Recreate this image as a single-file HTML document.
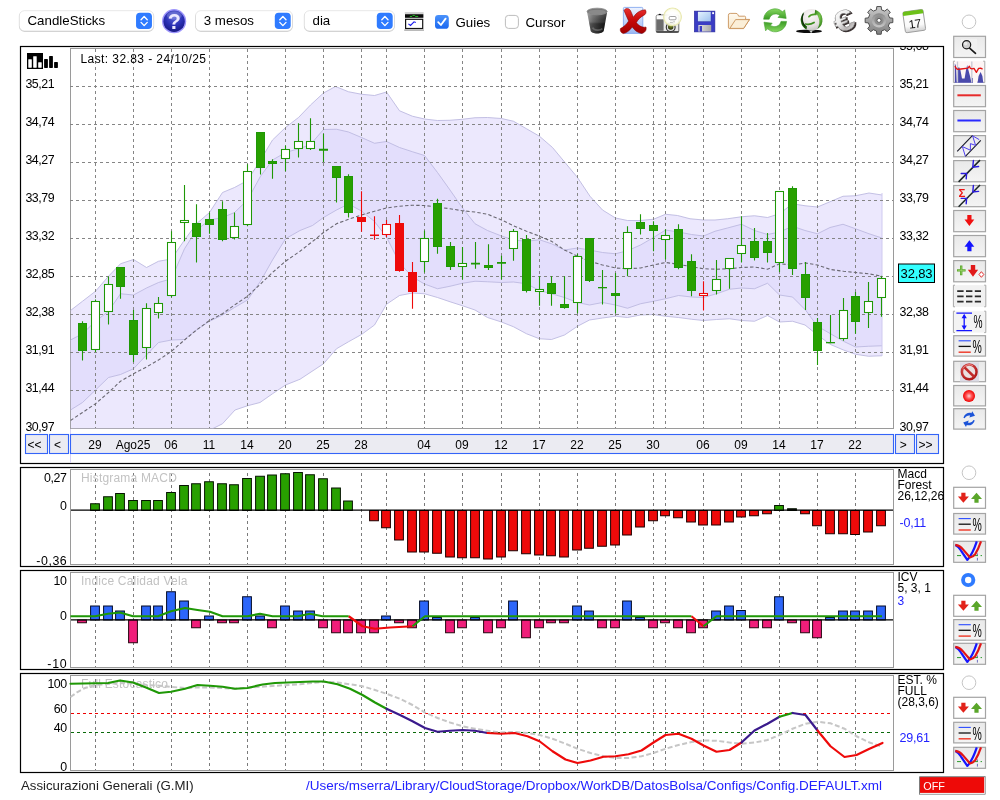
<!DOCTYPE html>
<html lang="ca"><head><meta charset="utf-8"><title>CandleSticks - Assicurazioni Generali (G.MI)</title>
<style>
html,body{margin:0;padding:0;background:#fff;}
body{width:1000px;height:800px;overflow:hidden;position:relative;font-family:"Liberation Sans",sans-serif;}
svg{position:absolute;left:0;top:0;display:block;opacity:.999}
text{font-family:"Liberation Sans",sans-serif;font-size:12px;fill:#000}
.ax{font-size:12.4px;letter-spacing:-0.42px}
.ttl{fill:#c2c2c2;font-size:12px}
.blue{fill:#2222ff}
.tb{font-size:13.3px}
</style></head><body>
<svg width="1000" height="800" viewBox="0 0 1000 800">
<defs>
<clipPath id="cpMain"><rect x="70.5" y="48.5" width="823" height="380"/></clipPath>
<clipPath id="cpLbl"><rect x="21" y="47" width="922" height="416"/></clipPath>
<clipPath id="cpMacd"><rect x="21" y="468" width="922" height="98"/></clipPath>
<linearGradient id="gBtn" x1="0" y1="0" x2="0" y2="1"><stop offset="0" stop-color="#e9e9e9"/><stop offset="1" stop-color="#f4f4f4"/></linearGradient>

<linearGradient id="gStep" x1="0" y1="0" x2="0" y2="1"><stop offset="0" stop-color="#4a92fb"/><stop offset="1" stop-color="#1b68f0"/></linearGradient>
<radialGradient id="gHelp" cx=".5" cy=".3" r=".75"><stop offset="0" stop-color="#5a63d8"/><stop offset=".55" stop-color="#2a2fb4"/><stop offset="1" stop-color="#15167a"/></radialGradient>
<linearGradient id="gTrash" x1="0" y1="0" x2="1" y2="0"><stop offset="0" stop-color="#8a8a8a"/><stop offset=".3" stop-color="#5c5c5c"/><stop offset=".7" stop-color="#2e2e2e"/><stop offset="1" stop-color="#141414"/></linearGradient>
<linearGradient id="gTrashV" x1="0" y1="0" x2="0" y2="1"><stop offset="0" stop-color="#fff" stop-opacity=".3"/><stop offset=".45" stop-color="#fff" stop-opacity=".08"/><stop offset=".6" stop-color="#000" stop-opacity=".25"/><stop offset="1" stop-color="#000" stop-opacity=".35"/></linearGradient>
<linearGradient id="gPage" x1="0" y1="0" x2="0" y2="1"><stop offset="0" stop-color="#eef3ff"/><stop offset="1" stop-color="#9cb8f2"/></linearGradient>
<linearGradient id="gX" x1="0" y1="0" x2="0" y2="1"><stop offset="0" stop-color="#e83030"/><stop offset=".5" stop-color="#c40808"/><stop offset="1" stop-color="#a00000"/></linearGradient>
<radialGradient id="gFlash" cx=".5" cy=".5" r=".5"><stop offset="0" stop-color="#fff"/><stop offset=".45" stop-color="#fff" stop-opacity=".95"/><stop offset=".75" stop-color="#fdfdf0" stop-opacity=".9"/><stop offset=".9" stop-color="#e6e6a8" stop-opacity=".95"/><stop offset="1" stop-color="#f0f0c0" stop-opacity="0"/></radialGradient><radialGradient id="gLens" cx=".5" cy=".3" r=".7"><stop offset="0" stop-color="#8a9a30"/><stop offset="1" stop-color="#202808"/></radialGradient>
<linearGradient id="gCam" x1="0" y1="0" x2="1" y2="0"><stop offset="0" stop-color="#6a6a6a"/><stop offset=".3" stop-color="#7e7e7e"/><stop offset=".34" stop-color="#c8c8c8"/><stop offset="1" stop-color="#d8d8d8"/></linearGradient>
<linearGradient id="gLabel" x1="0" y1="0" x2="1" y2="1"><stop offset="0" stop-color="#e6f4ff"/><stop offset="1" stop-color="#9cc0ee"/></linearGradient>
<linearGradient id="gShut" x1="0" y1="0" x2="1" y2="0"><stop offset="0" stop-color="#e0e0e0"/><stop offset="1" stop-color="#a8a8a8"/></linearGradient>
<linearGradient id="gFold" x1="0" y1="0" x2="0" y2="1"><stop offset="0" stop-color="#fffaf0"/><stop offset="1" stop-color="#f6e6c8"/></linearGradient>
<linearGradient id="gRef" x1="0" y1="0" x2="0" y2="1"><stop offset="0" stop-color="#86d860"/><stop offset="1" stop-color="#3a9a24"/></linearGradient>
<radialGradient id="gBallW" cx=".45" cy=".3" r=".8"><stop offset="0" stop-color="#fbf8f8"/><stop offset=".6" stop-color="#e6e0e0"/><stop offset="1" stop-color="#b4b8b4"/></radialGradient><radialGradient id="gBall" cx=".6" cy=".35" r=".7"><stop offset="0" stop-color="#7cc850"/><stop offset=".6" stop-color="#4a9a2a"/><stop offset="1" stop-color="#2a6a14"/></radialGradient>
<linearGradient id="gSilver" x1="0" y1="0" x2="1" y2="1"><stop offset="0" stop-color="#fafafa"/><stop offset=".5" stop-color="#d0d0d0"/><stop offset="1" stop-color="#8a8a8a"/></linearGradient>
<linearGradient id="gEuro" gradientUnits="userSpaceOnUse" x1="-8" y1="-12" x2="8" y2="12"><stop offset="0" stop-color="#ffffff"/><stop offset=".45" stop-color="#ececec"/><stop offset=".75" stop-color="#b4b0b0"/><stop offset="1" stop-color="#f0f0f0"/></linearGradient>
<linearGradient id="gGear" x1="0" y1="0" x2="0" y2="1"><stop offset="0" stop-color="#cacaca"/><stop offset="1" stop-color="#808080"/></linearGradient>
<linearGradient id="gGear2" x1="0" y1="0" x2="0" y2="1"><stop offset="0" stop-color="#8a8a8a"/><stop offset="1" stop-color="#c8c8c8"/></linearGradient>
<linearGradient id="gCal" x1="0" y1="0" x2="0" y2="1"><stop offset="0" stop-color="#fff"/><stop offset=".7" stop-color="#fafafa"/><stop offset="1" stop-color="#d0d0d0"/></linearGradient>
<radialGradient id="gStop" cx=".4" cy=".35" r=".7"><stop offset="0" stop-color="#e86a6a"/><stop offset="1" stop-color="#b01818"/></radialGradient>
<radialGradient id="gRec" cx=".5" cy=".5" r=".5"><stop offset="0" stop-color="#ffd0d0"/><stop offset=".45" stop-color="#ff5a5a"/><stop offset="1" stop-color="#ee0000"/></radialGradient>
<filter id="fSh" x="-10%" y="-10%" width="120%" height="140%"><feGaussianBlur stdDeviation=".7"/></filter>

</defs>
<rect width="1000" height="800" fill="#fff"/>

<rect x="19.05" y="11.3" width="134.9" height="20.6" rx="5.5" fill="#000" fill-opacity=".14" filter="url(#fSh)"/><rect x="19.25" y="10.7" width="134.5" height="20.2" rx="5.2" fill="#fff" stroke="#000" stroke-opacity=".12" stroke-width=".8"/><rect x="136.05" y="12.8" width="15.9" height="16.2" rx="3.8" fill="#2f7bff"/><path d="M141.05 19.7L144.15 16.5L147.25 19.7M141.05 22.4L144.15 25.6L147.25 22.4" fill="none" stroke="#fff" stroke-width="1.35" stroke-linecap="round" stroke-linejoin="round"/><text class="tb" x="27.5" y="25">CandleSticks</text>
<circle cx="174.1" cy="21.2" r="12.1" fill="#9c94fb"/><circle cx="174.1" cy="21.2" r="10.7" fill="url(#gHelp)"/>
<ellipse cx="174.3" cy="15.5" rx="7.5" ry="4.2" fill="#fff" fill-opacity=".18"/>
<text x="174.3" y="29" text-anchor="middle" style="font-size:21.5px;font-weight:bold;fill:#ece8ff">?</text>
<rect x="195.3" y="11.3" width="97.4" height="20.6" rx="5.5" fill="#000" fill-opacity=".14" filter="url(#fSh)"/><rect x="195.5" y="10.7" width="97" height="20.2" rx="5.2" fill="#fff" stroke="#000" stroke-opacity=".12" stroke-width=".8"/><rect x="274.8" y="12.8" width="15.9" height="16.2" rx="3.8" fill="#2f7bff"/><path d="M279.8 19.7L282.9 16.5L286 19.7M279.8 22.4L282.9 25.6L286 22.4" fill="none" stroke="#fff" stroke-width="1.35" stroke-linecap="round" stroke-linejoin="round"/><text class="tb" x="203.75" y="25">3 mesos</text>
<rect x="304.05" y="11.3" width="90.65" height="20.6" rx="5.5" fill="#000" fill-opacity=".14" filter="url(#fSh)"/><rect x="304.25" y="10.7" width="90.25" height="20.2" rx="5.2" fill="#fff" stroke="#000" stroke-opacity=".12" stroke-width=".8"/><rect x="376.8" y="12.8" width="15.9" height="16.2" rx="3.8" fill="#2f7bff"/><path d="M381.8 19.7L384.9 16.5L388 19.7M381.8 22.4L384.9 25.6L388 22.4" fill="none" stroke="#fff" stroke-width="1.35" stroke-linecap="round" stroke-linejoin="round"/><text class="tb" x="312.5" y="25">dia</text>
<rect x="404.8" y="12.2" width="18.8" height="1.7" fill="#cdcdcd"/><rect x="405" y="14.2" width="18.4" height="3.6" fill="#0a0a0a"/><path d="M409.8 16.4h2.2l.9-1h1.7l.8 1h2.8" fill="none" stroke="#20c020" stroke-width="1"/><rect x="405.6" y="19.3" width="17.1" height="9.2" fill="#fff" stroke="#141414" stroke-width="1.2"/><path d="M404.2 30.1H424" stroke="#8c8c8c" stroke-width="1"/><path d="M408.4 23.9L410.5 25.5L414 21.8L415.8 22.6" fill="none" stroke="#1a1aee" stroke-width="1.1"/>
<rect x="435" y="15" width="13.8" height="13.8" rx="3.4" fill="url(#gStep)"/><path d="M438.2 22.2L440.9 25L445.6 18.6" fill="none" stroke="#fff" stroke-width="1.8" stroke-linecap="round" stroke-linejoin="round"/>
<text class="tb" x="455.5" y="26.7">Guies</text>
<rect x="505.4" y="15.4" width="13" height="13" rx="3.2" fill="#fff" stroke="#bdbdbd" stroke-width="1"/>
<text class="tb" x="525.5" y="26.7">Cursor</text>
<path d="M587 11.6C587 8.2 607.2 8.2 607.2 11.6L603.8 30.6C603.2 34.6 591 34.6 590.6 30.6Z" fill="url(#gTrash)"/>
<path d="M587 11.6C587 8.2 607.2 8.2 607.2 11.6L603.8 30.6C603.2 34.6 591 34.6 590.6 30.6Z" fill="url(#gTrashV)"/>
<ellipse cx="597.1" cy="11.5" rx="10" ry="3.3" fill="#777" stroke="#8e8e8e" stroke-width=".9"/><ellipse cx="597.1" cy="12" rx="8.6" ry="2.3" fill="#8a8a8a"/>
<path d="M592.6 27.6C594 30.6 600 31 602.4 28.6" fill="none" stroke="#9a9a9a" stroke-width="1.6" stroke-opacity=".45"/>
<rect x="623.4" y="7.4" width="19.4" height="26" rx="1" fill="url(#gPage)" stroke="#86a8ee" stroke-width=".9"/>
<path d="M624 10.4C625.8 7.6 629 7.8 630.6 10.8L633.4 17.2C636.4 12.6 640.6 9.8 645.4 9.8C646.8 12.2 646 14.4 643.6 15.4C640.6 17 638 19.6 636.4 22.6C638.8 26 642.2 27.8 646 27C646.8 30.4 644.8 33 641.4 33.4C637.6 32.8 634.4 30.2 632.2 27C629.8 30.4 626.8 33 623.2 33.6C620.8 32.8 619.8 30.6 620.4 28.6C624 26.8 626.8 24 628.6 21C627 17.2 625.2 13.6 624 10.4Z" fill="url(#gX)" stroke="#7c0000" stroke-width=".5"/>
<rect x="656.2" y="15" width="22.6" height="17.5" rx="1.6" fill="#e9e9e9" stroke="#5a5a5a" stroke-width=".9"/>
<rect x="656.7" y="19.2" width="6.9" height="11.6" fill="#6c6c6c"/><rect x="656.7" y="15.5" width="6.9" height="3.7" fill="#fbfbfb"/><ellipse cx="659.8" cy="14.4" rx="1.3" ry=".7" fill="#111"/>
<path d="M656.4 31.8H678.6" stroke="#4a4a4a" stroke-width="1.5"/>
<circle cx="670.7" cy="27.2" r="4.4" fill="#e4e4e4" stroke="#3a3a3a" stroke-width="1.2"/><circle cx="670.7" cy="27" r="2.7" fill="url(#gLens)"/>
<circle cx="672.5" cy="16.9" r="9.9" fill="url(#gFlash)"/>
<rect x="669.2" y="16.5" width="6.8" height="3.3" rx="1" fill="#fff" stroke="#8a8a8a" stroke-width=".8"/>
<path d="M670 22.4h2.4l1.2-.6h1.4" stroke="#9a9a9a" stroke-width=".6" fill="none"/>
<rect x="694.3" y="11.1" width="20.6" height="20.8" fill="#3a3cc4" stroke="#2a2a9a" stroke-width=".6"/>
<rect x="697.8" y="11.6" width="13.2" height="10" fill="url(#gLabel)" stroke="#2a2a9a" stroke-width=".4"/>
<rect x="698.4" y="25" width="12.8" height="6.6" fill="url(#gShut)"/><rect x="699.6" y="26" width="2.4" height="5.6" fill="#3a3cc4"/><rect x="712.2" y="12.2" width="1.8" height="1.9" fill="#fff"/>
<path d="M728.4 15.2Q728.4 13.4 730.2 13.4H736Q737.4 13.4 738 14.8L738.6 16.2H744.6Q745.6 16.2 745.6 17.4V19.4H749.6L743.6 28.6H729.6Q728.4 28.6 728.4 27.2Z" fill="url(#gFold)" stroke="#c8925a" stroke-width=".9" stroke-linejoin="round"/>
<path d="M729.8 28.4L735.6 19.6H749.4L743.6 28.4Z" fill="#fbefd8" stroke="#c8925a" stroke-width=".9" stroke-linejoin="round"/>
<path d="M763.6 19.2A11.4 11.4 0 0 1 782.6 11.8L784.6 9.8L786.2 18.4L778 17.4L779.8 15.4A6.6 6.6 0 0 0 769.2 19.2Z" fill="url(#gRef)" stroke="#3f9e2a" stroke-width=".6" stroke-linejoin="round"/>
<path d="M763.6 19.2A11.4 11.4 0 0 1 782.6 11.8L784.6 9.8L786.2 18.4L778 17.4L779.8 15.4A6.6 6.6 0 0 0 769.2 19.2Z" transform="rotate(180 775.1 20.3)" fill="url(#gRef)" stroke="#3f9e2a" stroke-width=".6" stroke-linejoin="round"/>
<ellipse cx="809" cy="31.2" rx="13" ry="1.8" fill="#0c0c0c"/>
<circle cx="811.6" cy="19.9" r="10.8" fill="url(#gBallW)"/>
<path d="M815.2 9.7A10.8 10.8 0 0 1 817.4 29C819.6 25 820 21.4 818.6 18C818 16.2 817.4 14.8 816.8 13.9L814.6 14.5Z" fill="url(#gBall)"/>
<path d="M804.4 11.8A10.8 10.8 0 0 0 806.4 29.4C806.8 28.4 807 27.4 806.9 26.3C803.6 24.6 802.2 21 802.6 18C802.9 15.6 803.4 13.6 804.4 11.8Z" fill="#1c5a0c"/>
<path d="M803.4 13.6C801.6 17.6 802 22.6 805.2 26.4" fill="none" stroke="#061c02" stroke-width="1.1" stroke-opacity=".8"/>
<path d="M808.9 16.7Q811 13.8 816 14.4" fill="none" stroke="#4c9c26" stroke-width="1.7" stroke-linecap="round"/>
<path d="M805.6 24Q810 25 814.1 22.5" fill="none" stroke="#3c8c1e" stroke-width="1.7" stroke-linecap="round"/>
<path d="M809.6 31L811.2 33L812.6 30.8" fill="#dfe6e0" stroke="#8a8a8a" stroke-width=".3"/>
<g transform="translate(843.6 20.4) rotate(-22) scale(1.26 1)"><text x="0.6" y="11.8" text-anchor="middle" style="font-size:29px;font-weight:bold;fill:#3a3232;stroke:#3a3232;stroke-width:1.1px">€</text><text x="0" y="10.2" text-anchor="middle" style="font-size:29px;font-weight:bold;fill:url(#gEuro);stroke:#8a8a8a;stroke-width:.45px">€</text></g>
<path d="M876.81 6.57L881.19 6.57L881.54 9.80L884.70 11.11L887.23 9.07L890.33 12.17L888.29 14.70L889.60 17.86L892.83 18.21L892.83 22.59L889.60 22.94L888.29 26.10L890.33 28.63L887.23 31.73L884.70 29.69L881.54 31.00L881.19 34.23L876.81 34.23L876.46 31.00L873.30 29.69L870.77 31.73L867.67 28.63L869.71 26.10L868.40 22.94L865.17 22.59L865.17 18.21L868.40 17.86L869.71 14.70L867.67 12.17L870.77 9.07L873.30 11.11L876.46 9.80Z" fill="url(#gGear)" stroke="#4e4e4e" stroke-width="1" stroke-linejoin="round"/>
<circle cx="879" cy="20.4" r="7.2" fill="url(#gGear2)"/><circle cx="879" cy="20.4" r="4.6" fill="#8e8e8e"/><circle cx="879" cy="20.4" r="2" fill="#fff" stroke="#4a4a4a" stroke-width=".8"/>
<g transform="rotate(-8 914 21)"><rect x="904" y="10.6" width="20.4" height="21" rx="1.6" fill="url(#gCal)" stroke="#9a9a9a" stroke-width=".9"/><path d="M904 14.6V12.2Q904 10.6 905.6 10.6H922.8Q924.4 10.6 924.4 12.2V14.6Z" fill="#6cc018"/><text x="914.2" y="28" text-anchor="middle" style="font-size:12px;letter-spacing:-.6px;fill:#111">17</text></g>
<circle cx="969" cy="21.8" r="6.8" fill="#fff" stroke="#c6c6c6" stroke-width="1"/>
<rect x="20.5" y="46.5" width="923" height="417" fill="#fff" stroke="#000" stroke-width="1.2"/>
<rect x="70.5" y="48.5" width="823" height="380" fill="#fff" stroke="#9a9a9a" stroke-width="1"/>
<g clip-path="url(#cpMain)">
<polygon points="70.5,310.5 82.5,301.25 95.5,291.25 108.5,276.25 120.5,263.75 133.5,259.5 146.5,267.5 158.5,261.25 171.5,259 184.5,240 196.5,223.75 209.5,212.5 222.5,192.5 234.5,187.5 247.5,180.5 260.5,160 272.5,140 285.5,127.5 298.5,117.5 310.5,105 323.5,93 335.5,86.5 348.5,91.75 361.5,94.25 374.5,95.5 386.5,92 399.5,110.75 412.5,116.25 424.5,119 437.5,120.5 450,120.25 462.5,119.25 475,117.75 487.5,117.5 501.5,118.5 513.5,121.25 526.5,128.75 539.5,136.25 552.5,147.5 565,162.5 577.5,177.5 590,196.25 602.5,210 615.5,218 627.5,220.5 640,220.5 653.5,219.25 665.5,214.25 677.5,215.5 690,218.75 703.5,220 715,220 727.5,218.75 741.5,216.75 754.5,215.75 767.5,217.5 779.5,213.75 792.5,203.75 805,205.75 817.5,207 830,201.75 843,196.25 855.5,195.75 869,193 882,195 882,355.75 868.5,356.25 855.5,354.25 843.5,350 830.5,344.5 817.5,335 805,325 792.5,321.25 779.5,322 767.5,315.5 754.5,321.25 741.5,320.5 729.5,318.75 716.5,319.5 703.5,320.5 691.5,319.25 678.5,317.5 665.5,316.25 653.5,314.5 640.5,315 627.5,317.5 615.5,316.25 602.5,318 589.5,320 577.5,326.25 564.5,335 551.5,339.5 539.5,338.75 526.5,333.75 513.5,326.75 501.5,322 487.5,317.5 475,310 462.5,305.75 450,301.75 437.5,297.5 424.5,293.75 412.5,293 399.5,295.5 386.5,304.25 374.5,325 361.5,334.5 348.5,341.75 336.5,348.75 323.5,363.75 300,379.25 285.5,385 272.5,393.75 260,402.5 247.5,405.75 235,410 222.5,423.75 210,430 70.5,430" fill="#dcd5fb" fill-opacity=".55" stroke="none"/>
<polygon points="70.5,340 82.5,333.75 95.5,321.25 108.5,311.25 120.5,293.75 133.5,295 146.5,288 158.5,282.5 171.5,278.75 184.5,248.75 196.5,230 209.5,220 222.5,217.5 234.5,212.5 247.5,200 260.5,176.25 272.5,160 285.5,152.5 298.5,148.75 310,145 323.5,129.5 336.5,129.25 348.5,132 361.5,137.5 374.5,143.25 386.5,141.5 399.5,147.5 412.5,151.75 424.5,155.5 437.5,172.5 450,190 462.5,208 475,223.75 487.5,230.5 501.5,236 513.5,240 526.5,241.25 539.5,239.75 551.5,243.75 564.5,250 577.5,248 589.5,250 602.5,252.5 615.5,253.75 627.5,250.75 640.5,245 653.5,237.5 665.5,230 678.5,232 691.5,234.5 703.5,236 715,231.25 727.5,228 741.5,224.25 754.5,230.5 767.5,234.5 779.5,232 792.5,226.25 805,230.5 817.5,233.75 830,227.5 843,224.25 855.5,228.75 869,233.75 882,238 882,345.75 868.5,346.25 855.5,347 843.5,341.25 830.5,333.75 817.5,326.25 805.5,310 792.5,297 779.5,295 767.5,283.25 754.5,288.75 741.5,288 729.5,289.25 716.5,293.75 703.5,297.5 691.5,297 678.5,295.5 665.5,298.75 653.5,301.25 640.5,303.75 627.5,308.25 615.5,305 602.5,302.5 589.5,305 577.5,302.5 564.5,297.5 551.5,293.75 539.5,290.5 526.5,283.75 513.5,282 501.5,282.5 487.5,281.75 475,281.25 462.5,283.25 450,286.25 437.5,288.75 424.5,284 412.5,277 399.5,263 386.5,237 374.5,221.5 361.5,211 348.5,204 336.5,210 323.5,217.5 312.5,225.5 300,230.5 285.5,238.75 272.5,260 260.5,281.25 247.5,300 234.5,307.5 222.5,315 209.5,321.25 196.5,330 184.5,339.5 171.5,340 158.5,342.5 146.5,355 133.5,368.75 120.5,374.5 108.5,377.5 95.5,390 82.5,402.5 70.5,410" fill="#dcd5fb" fill-opacity=".55" stroke="none"/>
<polyline points="70.5,310.5 82.5,301.25 95.5,291.25 108.5,276.25 120.5,263.75 133.5,259.5 146.5,267.5 158.5,261.25 171.5,259 184.5,240 196.5,223.75 209.5,212.5 222.5,192.5 234.5,187.5 247.5,180.5 260.5,160 272.5,140 285.5,127.5 298.5,117.5 310.5,105 323.5,93 335.5,86.5 348.5,91.75 361.5,94.25 374.5,95.5 386.5,92 399.5,110.75 412.5,116.25 424.5,119 437.5,120.5 450,120.25 462.5,119.25 475,117.75 487.5,117.5 501.5,118.5 513.5,121.25 526.5,128.75 539.5,136.25 552.5,147.5 565,162.5 577.5,177.5 590,196.25 602.5,210 615.5,218 627.5,220.5 640,220.5 653.5,219.25 665.5,214.25 677.5,215.5 690,218.75 703.5,220 715,220 727.5,218.75 741.5,216.75 754.5,215.75 767.5,217.5 779.5,213.75 792.5,203.75 805,205.75 817.5,207 830,201.75 843,196.25 855.5,195.75 869,193 882,195" fill="none" stroke="#bdb9e0" stroke-width="1" stroke-opacity=".9"/>
<polyline points="70.5,430 210,430 222.5,423.75 235,410 247.5,405.75 260,402.5 272.5,393.75 285.5,385 300,379.25 323.5,363.75 336.5,348.75 348.5,341.75 361.5,334.5 374.5,325 386.5,304.25 399.5,295.5 412.5,293 424.5,293.75 437.5,297.5 450,301.75 462.5,305.75 475,310 487.5,317.5 501.5,322 513.5,326.75 526.5,333.75 539.5,338.75 551.5,339.5 564.5,335 577.5,326.25 589.5,320 602.5,318 615.5,316.25 627.5,317.5 640.5,315 653.5,314.5 665.5,316.25 678.5,317.5 691.5,319.25 703.5,320.5 716.5,319.5 729.5,318.75 741.5,320.5 754.5,321.25 767.5,315.5 779.5,322 792.5,321.25 805,325 817.5,335 830.5,344.5 843.5,350 855.5,354.25 868.5,356.25 882,355.75" fill="none" stroke="#bdb9e0" stroke-width="1" stroke-opacity=".9"/>
<polyline points="70.5,340 82.5,333.75 95.5,321.25 108.5,311.25 120.5,293.75 133.5,295 146.5,288 158.5,282.5 171.5,278.75 184.5,248.75 196.5,230 209.5,220 222.5,217.5 234.5,212.5 247.5,200 260.5,176.25 272.5,160 285.5,152.5 298.5,148.75 310,145 323.5,129.5 336.5,129.25 348.5,132 361.5,137.5 374.5,143.25 386.5,141.5 399.5,147.5 412.5,151.75 424.5,155.5 437.5,172.5 450,190 462.5,208 475,223.75 487.5,230.5 501.5,236 513.5,240 526.5,241.25 539.5,239.75 551.5,243.75 564.5,250 577.5,248 589.5,250 602.5,252.5 615.5,253.75 627.5,250.75 640.5,245 653.5,237.5 665.5,230 678.5,232 691.5,234.5 703.5,236 715,231.25 727.5,228 741.5,224.25 754.5,230.5 767.5,234.5 779.5,232 792.5,226.25 805,230.5 817.5,233.75 830,227.5 843,224.25 855.5,228.75 869,233.75 882,238" fill="none" stroke="#bdb9e0" stroke-width="1" stroke-opacity=".9"/>
<polyline points="70.5,410 82.5,402.5 95.5,390 108.5,377.5 120.5,374.5 133.5,368.75 146.5,355 158.5,342.5 171.5,340 184.5,339.5 196.5,330 209.5,321.25 222.5,315 234.5,307.5 247.5,300 260.5,281.25 272.5,260 285.5,238.75 300,230.5 312.5,225.5 323.5,217.5 336.5,210 348.5,204 361.5,211 374.5,221.5 386.5,237 399.5,263 412.5,277 424.5,284 437.5,288.75 450,286.25 462.5,283.25 475,281.25 487.5,281.75 501.5,282.5 513.5,282 526.5,283.75 539.5,290.5 551.5,293.75 564.5,297.5 577.5,302.5 589.5,305 602.5,302.5 615.5,305 627.5,308.25 640.5,303.75 653.5,301.25 665.5,298.75 678.5,295.5 691.5,297 703.5,297.5 716.5,293.75 729.5,289.25 741.5,288 754.5,288.75 767.5,283.25 779.5,295 792.5,297 805.5,310 817.5,326.25 830.5,333.75 843.5,341.25 855.5,347 868.5,346.25 882,345.75" fill="none" stroke="#bdb9e0" stroke-width="1" stroke-opacity=".9"/>
<line x1="882" y1="193" x2="882" y2="356" stroke="#cfcaf0" stroke-width="1"/>
</g>
<path d="M95.5 49V428M133.5 49V428M171.5 49V428M209.5 49V428M247.5 49V428M285.5 49V428M323.5 49V428M361.5 49V428M386.5 49V428M424.5 49V428M462.5 49V428M501.5 49V428M539.5 49V428M577.5 49V428M615.5 49V428M653.5 49V428M665.5 49V428M703.5 49V428M741.5 49V428M779.5 49V428M817.5 49V428M855.5 49V428M70 86.5H893M70 124.5H893M70 162.5H893M70 200.5H893M70 238.5H893M70 276.5H893M70 314.5H893M70 352.5H893M70 390.5H893" stroke="#858585" stroke-width="1" stroke-dasharray="3 3" fill="none"/>
<polyline points="70.5,420.5 82.5,412.5 95.5,403.75 108.5,392.5 120.5,381.25 133.5,373.75 146.5,367 158.5,360 171.5,351.25 184.5,340 196.5,330 209.5,320.5 222.5,313.75 234.5,305 247.5,296.25 260.5,284 272.5,272.5 285.5,261.25 300,251.25 315,239.5 323.5,232.5 336.5,223.75 348.5,219.25 361.5,215 374.5,211.25 386.5,208 399.5,206.25 412.5,205.25 424.5,205.5 437.5,207 450,208.75 462.5,210.75 475,212 487.5,214.25 501.5,220 513.5,225.75 526.5,231.25 539.5,236.25 551.5,241.25 564.5,250 577.5,256.25 589.5,261.25 602.5,265 615.5,268 627.5,268.75 640.5,268 653.5,265 665.5,262.5 678.5,264.25 691.5,266.75 703.5,268.75 716.5,269.25 729.5,268.75 741.5,267.5 754.5,267 767.5,269.25 779.5,263.75 792.5,265 805.5,263 817.5,265 830.5,269.5 843.5,271.25 855.5,272.5 868.5,273.75 882,276.25" fill="none" stroke="#6a6872" stroke-width="1.1" stroke-dasharray="3.4 2.2" clip-path="url(#cpMain)"/>
<line x1="82.5" y1="321.25" x2="82.5" y2="360.5" stroke="#1f9806" stroke-width="1.1"/>
<rect x="78.5" y="323.5" width="8" height="27" fill="#28a000" stroke="#1f9806" stroke-width="1"/>
<line x1="95.5" y1="299.5" x2="95.5" y2="352" stroke="#1f9806" stroke-width="1.1"/>
<rect x="91.5" y="301.5" width="8" height="48" fill="#fff" stroke="#1f9806" stroke-width="1.05"/>
<line x1="108.5" y1="276.5" x2="108.5" y2="324.5" stroke="#1f9806" stroke-width="1.1"/>
<rect x="104.5" y="284.5" width="8" height="27" fill="#fff" stroke="#1f9806" stroke-width="1.05"/>
<line x1="120.5" y1="267" x2="120.5" y2="298.75" stroke="#1f9806" stroke-width="1.1"/>
<rect x="116.5" y="267.5" width="8" height="19" fill="#28a000" stroke="#1f9806" stroke-width="1"/>
<line x1="133.5" y1="310" x2="133.5" y2="362" stroke="#1f9806" stroke-width="1.1"/>
<rect x="129.5" y="320.5" width="8" height="34" fill="#28a000" stroke="#1f9806" stroke-width="1"/>
<line x1="146.5" y1="303.25" x2="146.5" y2="359.5" stroke="#1f9806" stroke-width="1.1"/>
<rect x="142.5" y="308.5" width="8" height="39" fill="#fff" stroke="#1f9806" stroke-width="1.05"/>
<line x1="158.5" y1="297" x2="158.5" y2="318.5" stroke="#1f9806" stroke-width="1.1"/>
<rect x="154.5" y="303.5" width="8" height="9" fill="#fff" stroke="#1f9806" stroke-width="1.05"/>
<line x1="171.5" y1="231.25" x2="171.5" y2="297.5" stroke="#1f9806" stroke-width="1.1"/>
<rect x="167.5" y="242.5" width="8" height="53" fill="#fff" stroke="#1f9806" stroke-width="1.05"/>
<line x1="184.5" y1="185" x2="184.5" y2="241.25" stroke="#1f9806" stroke-width="1.1"/>
<rect x="180.5" y="220.5" width="8" height="2" fill="#fff" stroke="#1f9806" stroke-width="1.05"/>
<line x1="196.5" y1="204.25" x2="196.5" y2="262.5" stroke="#1f9806" stroke-width="1.1"/>
<rect x="192.5" y="223.5" width="8" height="13" fill="#28a000" stroke="#1f9806" stroke-width="1"/>
<line x1="209.5" y1="212.5" x2="209.5" y2="233.75" stroke="#1f9806" stroke-width="1.1"/>
<rect x="205.5" y="219.5" width="8" height="5" fill="#28a000" stroke="#1f9806" stroke-width="1"/>
<line x1="222.5" y1="201.25" x2="222.5" y2="241.25" stroke="#1f9806" stroke-width="1.1"/>
<rect x="218.5" y="209.5" width="8" height="30" fill="#28a000" stroke="#1f9806" stroke-width="1"/>
<line x1="234.5" y1="212.5" x2="234.5" y2="239.5" stroke="#1f9806" stroke-width="1.1"/>
<rect x="230.5" y="226.5" width="8" height="11" fill="#fff" stroke="#1f9806" stroke-width="1.05"/>
<line x1="247.5" y1="164.25" x2="247.5" y2="226.25" stroke="#1f9806" stroke-width="1.1"/>
<rect x="243.5" y="171.5" width="8" height="53" fill="#fff" stroke="#1f9806" stroke-width="1.05"/>
<line x1="260.5" y1="132.25" x2="260.5" y2="174.5" stroke="#1f9806" stroke-width="1.1"/>
<rect x="256.5" y="132.5" width="8" height="35" fill="#28a000" stroke="#1f9806" stroke-width="1"/>
<line x1="272.5" y1="159.25" x2="272.5" y2="178.75" stroke="#1f9806" stroke-width="1.1"/>
<rect x="268.5" y="161.5" width="8" height="2" fill="#28a000" stroke="#1f9806" stroke-width="1"/>
<line x1="285.5" y1="145.5" x2="285.5" y2="171.25" stroke="#1f9806" stroke-width="1.1"/>
<rect x="281.5" y="149.5" width="8" height="9" fill="#fff" stroke="#1f9806" stroke-width="1.05"/>
<line x1="298.5" y1="123.25" x2="298.5" y2="157.5" stroke="#1f9806" stroke-width="1.1"/>
<rect x="294.5" y="141.5" width="8" height="7" fill="#fff" stroke="#1f9806" stroke-width="1.05"/>
<line x1="310.5" y1="118.25" x2="310.5" y2="150" stroke="#1f9806" stroke-width="1.1"/>
<rect x="306.5" y="141.5" width="8" height="7" fill="#fff" stroke="#1f9806" stroke-width="1.05"/>
<line x1="323.5" y1="133.75" x2="323.5" y2="162" stroke="#1f9806" stroke-width="1.1"/>
<rect x="319" y="148.75" width="9" height="2" fill="#1f9806"/>
<line x1="336.5" y1="166.25" x2="336.5" y2="202.5" stroke="#1f9806" stroke-width="1.1"/>
<rect x="332.5" y="166.5" width="8" height="11" fill="#28a000" stroke="#1f9806" stroke-width="1"/>
<line x1="348.5" y1="174.25" x2="348.5" y2="217.5" stroke="#1f9806" stroke-width="1.1"/>
<rect x="344.5" y="176.5" width="8" height="36" fill="#28a000" stroke="#1f9806" stroke-width="1"/>
<line x1="361.5" y1="191.25" x2="361.5" y2="231.75" stroke="#ee0a0a" stroke-width="1.1"/>
<rect x="357.5" y="217.5" width="8" height="4" fill="#ee0a0a" stroke="#ee0a0a" stroke-width="1"/>
<line x1="374.5" y1="216.25" x2="374.5" y2="240" stroke="#ee0a0a" stroke-width="1.1"/>
<rect x="370" y="234.5" width="9" height="1.5" fill="#ee0a0a"/>
<line x1="386.5" y1="220" x2="386.5" y2="237" stroke="#ee0a0a" stroke-width="1.1"/>
<rect x="382.5" y="224.5" width="8" height="10" fill="#fff" stroke="#ee0a0a" stroke-width="1.05"/>
<line x1="399.5" y1="215" x2="399.5" y2="271.75" stroke="#ee0a0a" stroke-width="1.1"/>
<rect x="395.5" y="223.5" width="8" height="47" fill="#ee0a0a" stroke="#ee0a0a" stroke-width="1"/>
<line x1="412.5" y1="262" x2="412.5" y2="308.75" stroke="#ee0a0a" stroke-width="1.1"/>
<rect x="408.5" y="272.5" width="8" height="19" fill="#ee0a0a" stroke="#ee0a0a" stroke-width="1"/>
<line x1="424.5" y1="230.5" x2="424.5" y2="272.5" stroke="#1f9806" stroke-width="1.1"/>
<rect x="420.5" y="238.5" width="8" height="23" fill="#fff" stroke="#1f9806" stroke-width="1.05"/>
<line x1="437.5" y1="198.75" x2="437.5" y2="253.75" stroke="#1f9806" stroke-width="1.1"/>
<rect x="433.5" y="203.5" width="8" height="43" fill="#28a000" stroke="#1f9806" stroke-width="1"/>
<line x1="450.5" y1="242" x2="450.5" y2="270" stroke="#1f9806" stroke-width="1.1"/>
<rect x="446.5" y="246.5" width="8" height="20" fill="#28a000" stroke="#1f9806" stroke-width="1"/>
<line x1="462.5" y1="247" x2="462.5" y2="279.5" stroke="#1f9806" stroke-width="1.1"/>
<rect x="458.5" y="263.5" width="8" height="3" fill="#fff" stroke="#1f9806" stroke-width="1.05"/>
<line x1="475.5" y1="242" x2="475.5" y2="268.75" stroke="#1f9806" stroke-width="1.1"/>
<rect x="471" y="262.75" width="9" height="1.75" fill="#1f9806"/>
<line x1="488.5" y1="244.25" x2="488.5" y2="270" stroke="#1f9806" stroke-width="1.1"/>
<rect x="484.5" y="265.5" width="8" height="2" fill="#28a000" stroke="#1f9806" stroke-width="1"/>
<line x1="501.5" y1="255.75" x2="501.5" y2="279.5" stroke="#1f9806" stroke-width="1.1"/>
<rect x="497" y="262" width="9" height="1.75" fill="#1f9806"/>
<line x1="513.5" y1="229" x2="513.5" y2="260.75" stroke="#1f9806" stroke-width="1.1"/>
<rect x="509.5" y="231.5" width="8" height="17" fill="#fff" stroke="#1f9806" stroke-width="1.05"/>
<line x1="526.5" y1="235" x2="526.5" y2="292.5" stroke="#1f9806" stroke-width="1.1"/>
<rect x="522.5" y="239.5" width="8" height="51" fill="#28a000" stroke="#1f9806" stroke-width="1"/>
<line x1="539.5" y1="276.25" x2="539.5" y2="305.75" stroke="#1f9806" stroke-width="1.1"/>
<rect x="535.5" y="289.5" width="8" height="2" fill="#fff" stroke="#1f9806" stroke-width="1.05"/>
<line x1="551.5" y1="276.25" x2="551.5" y2="305.75" stroke="#1f9806" stroke-width="1.1"/>
<rect x="547.5" y="283.5" width="8" height="10" fill="#28a000" stroke="#1f9806" stroke-width="1"/>
<line x1="564.5" y1="276.25" x2="564.5" y2="308.75" stroke="#1f9806" stroke-width="1.1"/>
<rect x="560.5" y="304.5" width="8" height="3" fill="#28a000" stroke="#1f9806" stroke-width="1"/>
<line x1="577.5" y1="253.75" x2="577.5" y2="313.25" stroke="#1f9806" stroke-width="1.1"/>
<rect x="573.5" y="256.5" width="8" height="46" fill="#fff" stroke="#1f9806" stroke-width="1.05"/>
<line x1="589.5" y1="238.25" x2="589.5" y2="282" stroke="#1f9806" stroke-width="1.1"/>
<rect x="585.5" y="238.5" width="8" height="42" fill="#28a000" stroke="#1f9806" stroke-width="1"/>
<line x1="602.5" y1="270" x2="602.5" y2="304.5" stroke="#1f9806" stroke-width="1.1"/>
<rect x="598" y="287" width="9" height="1.3" fill="#1f9806"/>
<line x1="615.5" y1="273" x2="615.5" y2="313.25" stroke="#1f9806" stroke-width="1.1"/>
<rect x="611.5" y="293.5" width="8" height="2" fill="#28a000" stroke="#1f9806" stroke-width="1"/>
<line x1="627.5" y1="226.25" x2="627.5" y2="276.25" stroke="#1f9806" stroke-width="1.1"/>
<rect x="623.5" y="232.5" width="8" height="36" fill="#fff" stroke="#1f9806" stroke-width="1.05"/>
<line x1="640.5" y1="214.25" x2="640.5" y2="234.5" stroke="#1f9806" stroke-width="1.1"/>
<rect x="636.5" y="222.5" width="8" height="6" fill="#28a000" stroke="#1f9806" stroke-width="1"/>
<line x1="653.5" y1="221.25" x2="653.5" y2="251.25" stroke="#1f9806" stroke-width="1.1"/>
<rect x="649.5" y="225.5" width="8" height="5" fill="#28a000" stroke="#1f9806" stroke-width="1"/>
<line x1="665.5" y1="229.25" x2="665.5" y2="259.5" stroke="#1f9806" stroke-width="1.1"/>
<rect x="661.5" y="235.5" width="8" height="4" fill="#fff" stroke="#1f9806" stroke-width="1.05"/>
<line x1="678.5" y1="224.25" x2="678.5" y2="269.25" stroke="#1f9806" stroke-width="1.1"/>
<rect x="674.5" y="229.5" width="8" height="38" fill="#28a000" stroke="#1f9806" stroke-width="1"/>
<line x1="691.5" y1="254.25" x2="691.5" y2="296.25" stroke="#1f9806" stroke-width="1.1"/>
<rect x="687.5" y="261.5" width="8" height="29" fill="#28a000" stroke="#1f9806" stroke-width="1"/>
<line x1="703.5" y1="281.25" x2="703.5" y2="310.5" stroke="#ee0a0a" stroke-width="1.1"/>
<rect x="699.5" y="293.5" width="8" height="2" fill="#fff" stroke="#ee0a0a" stroke-width="1.05"/>
<line x1="716.5" y1="260" x2="716.5" y2="294.5" stroke="#1f9806" stroke-width="1.1"/>
<rect x="712.5" y="279.5" width="8" height="11" fill="#fff" stroke="#1f9806" stroke-width="1.05"/>
<line x1="729.5" y1="258.25" x2="729.5" y2="288.75" stroke="#1f9806" stroke-width="1.1"/>
<rect x="725.5" y="258.5" width="8" height="10" fill="#fff" stroke="#1f9806" stroke-width="1.05"/>
<line x1="741.5" y1="216.25" x2="741.5" y2="262.5" stroke="#1f9806" stroke-width="1.1"/>
<rect x="737.5" y="245.5" width="8" height="8" fill="#fff" stroke="#1f9806" stroke-width="1.05"/>
<line x1="754.5" y1="228" x2="754.5" y2="260.5" stroke="#1f9806" stroke-width="1.1"/>
<rect x="750.5" y="241.5" width="8" height="16" fill="#28a000" stroke="#1f9806" stroke-width="1"/>
<line x1="767.5" y1="233" x2="767.5" y2="262.5" stroke="#1f9806" stroke-width="1.1"/>
<rect x="763.5" y="241.5" width="8" height="11" fill="#28a000" stroke="#1f9806" stroke-width="1"/>
<line x1="779.5" y1="191.25" x2="779.5" y2="272" stroke="#1f9806" stroke-width="1.1"/>
<rect x="775.5" y="191.5" width="8" height="71" fill="#fff" stroke="#1f9806" stroke-width="1.05"/>
<line x1="792.5" y1="186.25" x2="792.5" y2="275" stroke="#1f9806" stroke-width="1.1"/>
<rect x="788.5" y="188.5" width="8" height="80" fill="#28a000" stroke="#1f9806" stroke-width="1"/>
<line x1="805.5" y1="262" x2="805.5" y2="310" stroke="#1f9806" stroke-width="1.1"/>
<rect x="801.5" y="274.5" width="8" height="23" fill="#28a000" stroke="#1f9806" stroke-width="1"/>
<line x1="817.5" y1="318" x2="817.5" y2="365" stroke="#1f9806" stroke-width="1.1"/>
<rect x="813.5" y="322.5" width="8" height="28" fill="#28a000" stroke="#1f9806" stroke-width="1"/>
<line x1="830.5" y1="315" x2="830.5" y2="343.2" stroke="#1f9806" stroke-width="1.1"/>
<rect x="826" y="342" width="9" height="1.3" fill="#1f9806"/>
<line x1="843.5" y1="298" x2="843.5" y2="340.75" stroke="#1f9806" stroke-width="1.1"/>
<rect x="839.5" y="310.5" width="8" height="28" fill="#fff" stroke="#1f9806" stroke-width="1.05"/>
<line x1="855.5" y1="292" x2="855.5" y2="333.75" stroke="#1f9806" stroke-width="1.1"/>
<rect x="851.5" y="296.5" width="8" height="25" fill="#28a000" stroke="#1f9806" stroke-width="1"/>
<line x1="868.5" y1="282" x2="868.5" y2="328" stroke="#1f9806" stroke-width="1.1"/>
<rect x="864.5" y="301.5" width="8" height="11" fill="#fff" stroke="#1f9806" stroke-width="1.05"/>
<line x1="881.5" y1="276.25" x2="881.5" y2="316.75" stroke="#1f9806" stroke-width="1.1"/>
<rect x="877.5" y="278.5" width="8" height="19" fill="#fff" stroke="#1f9806" stroke-width="1.05"/>
<g clip-path="url(#cpLbl)">
<text class="ax" x="899.6" y="50.2">35,68</text>
<text class="ax" x="25.4" y="88.2">35,21</text>
<text class="ax" x="899.6" y="88.2">35,21</text>
<text class="ax" x="25.4" y="126.2">34,74</text>
<text class="ax" x="899.6" y="126.2">34,74</text>
<text class="ax" x="25.4" y="164.2">34,27</text>
<text class="ax" x="899.6" y="164.2">34,27</text>
<text class="ax" x="25.4" y="202.2">33,79</text>
<text class="ax" x="899.6" y="202.2">33,79</text>
<text class="ax" x="25.4" y="240.2">33,32</text>
<text class="ax" x="899.6" y="240.2">33,32</text>
<text class="ax" x="25.4" y="278.2">32,85</text>
<text class="ax" x="25.4" y="316.2">32,38</text>
<text class="ax" x="899.6" y="316.2">32,38</text>
<text class="ax" x="25.4" y="354.2">31,91</text>
<text class="ax" x="899.6" y="354.2">31,91</text>
<text class="ax" x="25.4" y="392.2">31,44</text>
<text class="ax" x="899.6" y="392.2">31,44</text>
<text class="ax" x="25.4" y="431">30,97</text>
<text class="ax" x="899.6" y="431">30,97</text>
</g>
<rect x="898.5" y="264" width="36" height="18.5" fill="#3ff" stroke="#000" stroke-width="1"/>
<text x="900.6" y="278.4" style="font-size:13px;letter-spacing:-.15px">32,83</text>
<text x="80.5" y="63" textLength="125.5">Last: 32.83 - 24/10/25</text>
<g fill="#000"><rect x="27" y="53" width="16" height="16"/><rect x="44.1" y="59.1" width="3.8" height="8.8" rx=".6"/><rect x="49.1" y="56" width="3.8" height="11.9" rx=".6"/><rect x="54.1" y="62.1" width="3.8" height="5.8" rx=".6"/></g>
<g fill="#fff"><rect x="28.3" y="59.3" width="3.5" height="8.4" rx=".4"/><rect x="33.2" y="56.2" width="3.5" height="11.5" rx=".4"/><rect x="38.2" y="62.3" width="3.5" height="5.4" rx=".4"/></g>
<line x1="70.5" y1="429" x2="70.5" y2="463" stroke="#d6d0f4" stroke-width="1"/>
<rect x="25.5" y="434.5" width="22" height="19" fill="#ebebf2" stroke="#3464f8" stroke-width="1.1"/>
<text x="34.6" y="449.3" text-anchor="middle">&lt;&lt;</text>
<rect x="49.5" y="434.5" width="19" height="19" fill="#ebebf2" stroke="#3464f8" stroke-width="1.1"/>
<text x="57.6" y="449.3" text-anchor="middle">&lt;</text>
<rect x="70.5" y="434.5" width="823" height="19" fill="#ebebf2" stroke="#3464f8" stroke-width="1.1"/>
<rect x="895.5" y="434.5" width="19" height="19" fill="#ebebf2" stroke="#3464f8" stroke-width="1.1"/>
<text x="903.2" y="449.3" text-anchor="middle">&gt;</text>
<rect x="916.5" y="434.5" width="22" height="19" fill="#ebebf2" stroke="#3464f8" stroke-width="1.1"/>
<text x="925.6" y="449.3" text-anchor="middle">&gt;&gt;</text>
<text x="95" y="448.8" text-anchor="middle">29</text>
<text x="133" y="448.8" text-anchor="middle">Ago25</text>
<text x="171" y="448.8" text-anchor="middle">06</text>
<text x="209" y="448.8" text-anchor="middle">11</text>
<text x="247" y="448.8" text-anchor="middle">14</text>
<text x="285" y="448.8" text-anchor="middle">20</text>
<text x="323" y="448.8" text-anchor="middle">25</text>
<text x="361" y="448.8" text-anchor="middle">28</text>
<text x="424" y="448.8" text-anchor="middle">04</text>
<text x="462" y="448.8" text-anchor="middle">09</text>
<text x="501" y="448.8" text-anchor="middle">12</text>
<text x="539" y="448.8" text-anchor="middle">17</text>
<text x="577" y="448.8" text-anchor="middle">22</text>
<text x="615" y="448.8" text-anchor="middle">25</text>
<text x="653" y="448.8" text-anchor="middle">30</text>
<text x="703" y="448.8" text-anchor="middle">06</text>
<text x="741" y="448.8" text-anchor="middle">09</text>
<text x="779" y="448.8" text-anchor="middle">14</text>
<text x="817" y="448.8" text-anchor="middle">17</text>
<text x="855" y="448.8" text-anchor="middle">22</text>
<rect x="20.5" y="467.5" width="923" height="99" fill="#fff" stroke="#000" stroke-width="1.2"/>
<rect x="70.5" y="469.5" width="823" height="95" fill="#fff" stroke="#9a9a9a" stroke-width="1"/>
<path d="M95.5 473V564M133.5 473V564M171.5 473V564M209.5 473V564M247.5 473V564M285.5 473V564M323.5 473V564M361.5 473V564M386.5 473V564M424.5 473V564M462.5 473V564M501.5 473V564M539.5 473V564M577.5 473V564M615.5 473V564M653.5 473V564M665.5 473V564M703.5 473V564M741.5 473V564M779.5 473V564M817.5 473V564M855.5 473V564" stroke="#7a7a7a" stroke-width="1" stroke-dasharray="3 3" fill="none"/>
<text class="ttl" x="81" y="482" textLength="95.8">Histgrama MACD</text>
<rect x="90.6" y="503.75" width="8.8" height="6.75" fill="#28a000" stroke="#061402" stroke-width="1"/>
<rect x="103.6" y="496.75" width="8.8" height="13.75" fill="#28a000" stroke="#061402" stroke-width="1"/>
<rect x="115.6" y="493.5" width="8.8" height="17" fill="#28a000" stroke="#061402" stroke-width="1"/>
<rect x="128.6" y="500.5" width="8.8" height="10" fill="#28a000" stroke="#061402" stroke-width="1"/>
<rect x="141.6" y="500.5" width="8.8" height="10" fill="#28a000" stroke="#061402" stroke-width="1"/>
<rect x="153.6" y="500.5" width="8.8" height="10" fill="#28a000" stroke="#061402" stroke-width="1"/>
<rect x="166.6" y="492.5" width="8.8" height="18" fill="#28a000" stroke="#061402" stroke-width="1"/>
<rect x="179.6" y="485.5" width="8.8" height="25" fill="#28a000" stroke="#061402" stroke-width="1"/>
<rect x="191.6" y="483.75" width="8.8" height="26.75" fill="#28a000" stroke="#061402" stroke-width="1"/>
<rect x="204.6" y="481.75" width="8.8" height="28.75" fill="#28a000" stroke="#061402" stroke-width="1"/>
<rect x="217.6" y="483.75" width="8.8" height="26.75" fill="#28a000" stroke="#061402" stroke-width="1"/>
<rect x="229.6" y="484.75" width="8.8" height="25.75" fill="#28a000" stroke="#061402" stroke-width="1"/>
<rect x="242.6" y="478.5" width="8.8" height="32" fill="#28a000" stroke="#061402" stroke-width="1"/>
<rect x="255.6" y="476.25" width="8.8" height="34.25" fill="#28a000" stroke="#061402" stroke-width="1"/>
<rect x="267.6" y="475" width="8.8" height="35.5" fill="#28a000" stroke="#061402" stroke-width="1"/>
<rect x="280.6" y="473.75" width="8.8" height="36.75" fill="#28a000" stroke="#061402" stroke-width="1"/>
<rect x="293.6" y="472.5" width="8.8" height="38" fill="#28a000" stroke="#061402" stroke-width="1"/>
<rect x="305.6" y="474.75" width="8.8" height="35.75" fill="#28a000" stroke="#061402" stroke-width="1"/>
<rect x="318.6" y="478.75" width="8.8" height="31.75" fill="#28a000" stroke="#061402" stroke-width="1"/>
<rect x="331.6" y="488" width="8.8" height="22.5" fill="#28a000" stroke="#061402" stroke-width="1"/>
<rect x="343.6" y="501" width="8.8" height="9.5" fill="#28a000" stroke="#061402" stroke-width="1"/>
<rect x="369.6" y="510.5" width="8.8" height="10.25" fill="#ee0a0a" stroke="#1a0101" stroke-width="1"/>
<rect x="381.6" y="510.5" width="8.8" height="17.25" fill="#ee0a0a" stroke="#1a0101" stroke-width="1"/>
<rect x="394.6" y="510.5" width="8.8" height="29.5" fill="#ee0a0a" stroke="#1a0101" stroke-width="1"/>
<rect x="407.6" y="510.5" width="8.8" height="41.5" fill="#ee0a0a" stroke="#1a0101" stroke-width="1"/>
<rect x="419.6" y="510.5" width="8.8" height="41.5" fill="#ee0a0a" stroke="#1a0101" stroke-width="1"/>
<rect x="432.6" y="510.5" width="8.8" height="42.75" fill="#ee0a0a" stroke="#1a0101" stroke-width="1"/>
<rect x="445.6" y="510.5" width="8.8" height="46.5" fill="#ee0a0a" stroke="#1a0101" stroke-width="1"/>
<rect x="457.6" y="510.5" width="8.8" height="47.25" fill="#ee0a0a" stroke="#1a0101" stroke-width="1"/>
<rect x="470.6" y="510.5" width="8.8" height="47.25" fill="#ee0a0a" stroke="#1a0101" stroke-width="1"/>
<rect x="483.6" y="510.5" width="8.8" height="48.5" fill="#ee0a0a" stroke="#1a0101" stroke-width="1"/>
<rect x="496.6" y="510.5" width="8.8" height="46.5" fill="#ee0a0a" stroke="#1a0101" stroke-width="1"/>
<rect x="508.6" y="510.5" width="8.8" height="40.25" fill="#ee0a0a" stroke="#1a0101" stroke-width="1"/>
<rect x="521.6" y="510.5" width="8.8" height="43.25" fill="#ee0a0a" stroke="#1a0101" stroke-width="1"/>
<rect x="534.6" y="510.5" width="8.8" height="44.5" fill="#ee0a0a" stroke="#1a0101" stroke-width="1"/>
<rect x="546.6" y="510.5" width="8.8" height="45.25" fill="#ee0a0a" stroke="#1a0101" stroke-width="1"/>
<rect x="559.6" y="510.5" width="8.8" height="46.5" fill="#ee0a0a" stroke="#1a0101" stroke-width="1"/>
<rect x="572.6" y="510.5" width="8.8" height="39.5" fill="#ee0a0a" stroke="#1a0101" stroke-width="1"/>
<rect x="584.6" y="510.5" width="8.8" height="37.75" fill="#ee0a0a" stroke="#1a0101" stroke-width="1"/>
<rect x="597.6" y="510.5" width="8.8" height="35.75" fill="#ee0a0a" stroke="#1a0101" stroke-width="1"/>
<rect x="610.6" y="510.5" width="8.8" height="34.5" fill="#ee0a0a" stroke="#1a0101" stroke-width="1"/>
<rect x="622.6" y="510.5" width="8.8" height="24.5" fill="#ee0a0a" stroke="#1a0101" stroke-width="1"/>
<rect x="635.6" y="510.5" width="8.8" height="16.5" fill="#ee0a0a" stroke="#1a0101" stroke-width="1"/>
<rect x="648.6" y="510.5" width="8.8" height="10.25" fill="#ee0a0a" stroke="#1a0101" stroke-width="1"/>
<rect x="660.6" y="510.5" width="8.8" height="5.25" fill="#ee0a0a" stroke="#1a0101" stroke-width="1"/>
<rect x="673.6" y="510.5" width="8.8" height="7.25" fill="#ee0a0a" stroke="#1a0101" stroke-width="1"/>
<rect x="686.6" y="510.5" width="8.8" height="11.5" fill="#ee0a0a" stroke="#1a0101" stroke-width="1"/>
<rect x="698.6" y="510.5" width="8.8" height="14.5" fill="#ee0a0a" stroke="#1a0101" stroke-width="1"/>
<rect x="711.6" y="510.5" width="8.8" height="14.5" fill="#ee0a0a" stroke="#1a0101" stroke-width="1"/>
<rect x="724.6" y="510.5" width="8.8" height="11.5" fill="#ee0a0a" stroke="#1a0101" stroke-width="1"/>
<rect x="736.6" y="510.5" width="8.8" height="6.5" fill="#ee0a0a" stroke="#1a0101" stroke-width="1"/>
<rect x="749.6" y="510.5" width="8.8" height="5.25" fill="#ee0a0a" stroke="#1a0101" stroke-width="1"/>
<rect x="762.6" y="510.5" width="8.8" height="3.25" fill="#ee0a0a" stroke="#1a0101" stroke-width="1"/>
<rect x="774.6" y="505.5" width="8.8" height="5" fill="#28a000" stroke="#061402" stroke-width="1"/>
<rect x="787.6" y="508.75" width="8.8" height="1.75" fill="#111" stroke="#061402" stroke-width="1"/>
<rect x="800.6" y="510.5" width="8.8" height="3.25" fill="#ee0a0a" stroke="#1a0101" stroke-width="1"/>
<rect x="812.6" y="510.5" width="8.8" height="15.25" fill="#ee0a0a" stroke="#1a0101" stroke-width="1"/>
<rect x="825.6" y="510.5" width="8.8" height="23.25" fill="#ee0a0a" stroke="#1a0101" stroke-width="1"/>
<rect x="838.6" y="510.5" width="8.8" height="23.25" fill="#ee0a0a" stroke="#1a0101" stroke-width="1"/>
<rect x="850.6" y="510.5" width="8.8" height="24" fill="#ee0a0a" stroke="#1a0101" stroke-width="1"/>
<rect x="863.6" y="510.5" width="8.8" height="21.5" fill="#ee0a0a" stroke="#1a0101" stroke-width="1"/>
<rect x="876.6" y="510.5" width="8.8" height="15.25" fill="#ee0a0a" stroke="#1a0101" stroke-width="1"/>
<line x1="71" y1="510.2" x2="893" y2="510.2" stroke="#000" stroke-width="1.2"/>
<text class="ax" x="66.5" y="482" text-anchor="end">0,27</text><text class="ax" x="66.5" y="510" text-anchor="end">0</text><text class="ax" x="36.3" y="565.2" textLength="30">-0,36</text>
<g clip-path="url(#cpMacd)"><text x="897.5" y="477.6">Macd</text><text x="897.5" y="488.8">Forest</text><text x="897.5" y="500">26,12,26</text></g>
<text class="blue" x="899.5" y="527" style="font-size:12.5px;letter-spacing:-.2px">-0,11</text>
<rect x="20.5" y="570.5" width="923" height="99" fill="#fff" stroke="#000" stroke-width="1.2"/>
<rect x="70.5" y="572.5" width="823" height="95" fill="#fff" stroke="#9a9a9a" stroke-width="1"/>
<path d="M95.5 576V667M133.5 576V667M171.5 576V667M209.5 576V667M247.5 576V667M285.5 576V667M323.5 576V667M361.5 576V667M386.5 576V667M424.5 576V667M462.5 576V667M501.5 576V667M539.5 576V667M577.5 576V667M615.5 576V667M653.5 576V667M665.5 576V667M703.5 576V667M741.5 576V667M779.5 576V667M817.5 576V667M855.5 576V667" stroke="#7a7a7a" stroke-width="1" stroke-dasharray="3 3" fill="none"/>
<text class="ttl" x="81" y="585" textLength="106.5">Indice Calidad Vela</text>
<rect x="77.6" y="620" width="8.8" height="2.75" fill="#f01e7a" stroke="#24040f" stroke-width="1"/>
<rect x="90.6" y="606" width="8.8" height="14" fill="#2d66fa" stroke="#040a24" stroke-width="1"/>
<rect x="103.6" y="606" width="8.8" height="14" fill="#2d66fa" stroke="#040a24" stroke-width="1"/>
<rect x="115.6" y="611" width="8.8" height="9" fill="#2d66fa" stroke="#040a24" stroke-width="1"/>
<rect x="128.6" y="620" width="8.8" height="22.75" fill="#f01e7a" stroke="#24040f" stroke-width="1"/>
<rect x="141.6" y="606" width="8.8" height="14" fill="#2d66fa" stroke="#040a24" stroke-width="1"/>
<rect x="153.6" y="606" width="8.8" height="14" fill="#2d66fa" stroke="#040a24" stroke-width="1"/>
<rect x="166.6" y="591.75" width="8.8" height="28.25" fill="#2d66fa" stroke="#040a24" stroke-width="1"/>
<rect x="179.6" y="601" width="8.8" height="19" fill="#2d66fa" stroke="#040a24" stroke-width="1"/>
<rect x="191.6" y="620" width="8.8" height="7.75" fill="#f01e7a" stroke="#24040f" stroke-width="1"/>
<rect x="204.6" y="616" width="8.8" height="4" fill="#2d66fa" stroke="#040a24" stroke-width="1"/>
<rect x="217.6" y="620" width="8.8" height="2.75" fill="#f01e7a" stroke="#24040f" stroke-width="1"/>
<rect x="229.6" y="620" width="8.8" height="2.75" fill="#f01e7a" stroke="#24040f" stroke-width="1"/>
<rect x="242.6" y="596.75" width="8.8" height="23.25" fill="#2d66fa" stroke="#040a24" stroke-width="1"/>
<rect x="255.6" y="616" width="8.8" height="4" fill="#2d66fa" stroke="#040a24" stroke-width="1"/>
<rect x="267.6" y="620" width="8.8" height="7.75" fill="#f01e7a" stroke="#24040f" stroke-width="1"/>
<rect x="280.6" y="606" width="8.8" height="14" fill="#2d66fa" stroke="#040a24" stroke-width="1"/>
<rect x="293.6" y="611" width="8.8" height="9" fill="#2d66fa" stroke="#040a24" stroke-width="1"/>
<rect x="305.6" y="611" width="8.8" height="9" fill="#2d66fa" stroke="#040a24" stroke-width="1"/>
<rect x="318.6" y="620" width="8.8" height="7.75" fill="#f01e7a" stroke="#24040f" stroke-width="1"/>
<rect x="331.6" y="620" width="8.8" height="12.75" fill="#f01e7a" stroke="#24040f" stroke-width="1"/>
<rect x="343.6" y="620" width="8.8" height="12.75" fill="#f01e7a" stroke="#24040f" stroke-width="1"/>
<rect x="356.6" y="620" width="8.8" height="12.75" fill="#f01e7a" stroke="#24040f" stroke-width="1"/>
<rect x="369.6" y="620" width="8.8" height="12.75" fill="#f01e7a" stroke="#24040f" stroke-width="1"/>
<rect x="381.6" y="616" width="8.8" height="4" fill="#2d66fa" stroke="#040a24" stroke-width="1"/>
<rect x="394.6" y="620" width="8.8" height="2.75" fill="#f01e7a" stroke="#24040f" stroke-width="1"/>
<rect x="407.6" y="620" width="8.8" height="7.75" fill="#f01e7a" stroke="#24040f" stroke-width="1"/>
<rect x="419.6" y="601" width="8.8" height="19" fill="#2d66fa" stroke="#040a24" stroke-width="1"/>
<rect x="432.6" y="617.5" width="8.8" height="2.5" fill="#2d66fa" stroke="#040a24" stroke-width="1"/>
<rect x="445.6" y="620" width="8.8" height="12.75" fill="#f01e7a" stroke="#24040f" stroke-width="1"/>
<rect x="457.6" y="620" width="8.8" height="7.75" fill="#f01e7a" stroke="#24040f" stroke-width="1"/>
<rect x="470.6" y="617.5" width="8.8" height="2.5" fill="#2d66fa" stroke="#040a24" stroke-width="1"/>
<rect x="483.6" y="620" width="8.8" height="12.75" fill="#f01e7a" stroke="#24040f" stroke-width="1"/>
<rect x="496.6" y="620" width="8.8" height="7.75" fill="#f01e7a" stroke="#24040f" stroke-width="1"/>
<rect x="508.6" y="601" width="8.8" height="19" fill="#2d66fa" stroke="#040a24" stroke-width="1"/>
<rect x="521.6" y="620" width="8.8" height="17.75" fill="#f01e7a" stroke="#24040f" stroke-width="1"/>
<rect x="534.6" y="620" width="8.8" height="7.75" fill="#f01e7a" stroke="#24040f" stroke-width="1"/>
<rect x="546.6" y="620" width="8.8" height="2.75" fill="#f01e7a" stroke="#24040f" stroke-width="1"/>
<rect x="559.6" y="620" width="8.8" height="2.75" fill="#f01e7a" stroke="#24040f" stroke-width="1"/>
<rect x="572.6" y="606" width="8.8" height="14" fill="#2d66fa" stroke="#040a24" stroke-width="1"/>
<rect x="584.6" y="611" width="8.8" height="9" fill="#2d66fa" stroke="#040a24" stroke-width="1"/>
<rect x="597.6" y="620" width="8.8" height="7.75" fill="#f01e7a" stroke="#24040f" stroke-width="1"/>
<rect x="610.6" y="620" width="8.8" height="7.75" fill="#f01e7a" stroke="#24040f" stroke-width="1"/>
<rect x="622.6" y="601" width="8.8" height="19" fill="#2d66fa" stroke="#040a24" stroke-width="1"/>
<rect x="635.6" y="617.5" width="8.8" height="2.5" fill="#2d66fa" stroke="#040a24" stroke-width="1"/>
<rect x="648.6" y="620" width="8.8" height="7.75" fill="#f01e7a" stroke="#24040f" stroke-width="1"/>
<rect x="660.6" y="620" width="8.8" height="2.75" fill="#f01e7a" stroke="#24040f" stroke-width="1"/>
<rect x="673.6" y="620" width="8.8" height="7.75" fill="#f01e7a" stroke="#24040f" stroke-width="1"/>
<rect x="686.6" y="620" width="8.8" height="12.75" fill="#f01e7a" stroke="#24040f" stroke-width="1"/>
<rect x="698.6" y="620" width="8.8" height="7.75" fill="#f01e7a" stroke="#24040f" stroke-width="1"/>
<rect x="711.6" y="611" width="8.8" height="9" fill="#2d66fa" stroke="#040a24" stroke-width="1"/>
<rect x="724.6" y="606" width="8.8" height="14" fill="#2d66fa" stroke="#040a24" stroke-width="1"/>
<rect x="736.6" y="610.5" width="8.8" height="9.5" fill="#2d66fa" stroke="#040a24" stroke-width="1"/>
<rect x="749.6" y="620" width="8.8" height="7.75" fill="#f01e7a" stroke="#24040f" stroke-width="1"/>
<rect x="762.6" y="620" width="8.8" height="7.75" fill="#f01e7a" stroke="#24040f" stroke-width="1"/>
<rect x="774.6" y="596.75" width="8.8" height="23.25" fill="#2d66fa" stroke="#040a24" stroke-width="1"/>
<rect x="787.6" y="620" width="8.8" height="2.75" fill="#f01e7a" stroke="#24040f" stroke-width="1"/>
<rect x="800.6" y="620" width="8.8" height="12.75" fill="#f01e7a" stroke="#24040f" stroke-width="1"/>
<rect x="812.6" y="620" width="8.8" height="17.75" fill="#f01e7a" stroke="#24040f" stroke-width="1"/>
<rect x="825.6" y="617.5" width="8.8" height="2.5" fill="#2d66fa" stroke="#040a24" stroke-width="1"/>
<rect x="838.6" y="611" width="8.8" height="9" fill="#2d66fa" stroke="#040a24" stroke-width="1"/>
<rect x="850.6" y="611" width="8.8" height="9" fill="#2d66fa" stroke="#040a24" stroke-width="1"/>
<rect x="863.6" y="611" width="8.8" height="9" fill="#2d66fa" stroke="#040a24" stroke-width="1"/>
<rect x="876.6" y="606" width="8.8" height="14" fill="#2d66fa" stroke="#040a24" stroke-width="1"/>
<line x1="71" y1="619.8" x2="893" y2="619.8" stroke="#000" stroke-width="1.2"/>
<polyline points="70.5,616.25 95,616.25 108,613.75 120,612.5 133,616.25 146,616.25 158,616.25 171,611.25 185,608 197.5,610 210,611.75 222.5,616.25 247.5,616.25 260,613.75 272.5,616.25 298,616.25 310,613.75 322.5,616.25 348.75,616.25" fill="none" stroke="#1f9806" stroke-width="2.2" stroke-linejoin="round"/>
<polyline points="348.75,616.25 362.5,626.25 375,628.75 390,627.5 412.5,626.25" fill="none" stroke="#ee0a0a" stroke-width="2.2" stroke-linejoin="round"/>
<polyline points="412.5,626.25 425,616.25 691.5,616.25" fill="none" stroke="#1f9806" stroke-width="2.2" stroke-linejoin="round"/>
<polyline points="691.5,616.25 703.5,626.25" fill="none" stroke="#ee0a0a" stroke-width="2.2" stroke-linejoin="round"/>
<polyline points="703.5,626.25 716.5,616.25 882,616.25" fill="none" stroke="#1f9806" stroke-width="2.2" stroke-linejoin="round"/>
<text class="ax" x="66.5" y="585" text-anchor="end">10</text><text class="ax" x="66.5" y="620" text-anchor="end">0</text><text class="ax" x="47.3" y="668.2" textLength="19">-10</text>
<text x="897.5" y="580.6">ICV</text><text x="897.5" y="592">5, 3, 1</text><text class="blue" x="897.5" y="604.5">3</text>
<rect x="20.5" y="673.5" width="923" height="99" fill="#fff" stroke="#000" stroke-width="1.2"/>
<rect x="70.5" y="675.5" width="823" height="95" fill="#fff" stroke="#9a9a9a" stroke-width="1"/>
<path d="M95.5 679V770M133.5 679V770M171.5 679V770M209.5 679V770M247.5 679V770M285.5 679V770M323.5 679V770M361.5 679V770M386.5 679V770M424.5 679V770M462.5 679V770M501.5 679V770M539.5 679V770M577.5 679V770M615.5 679V770M653.5 679V770M665.5 679V770M703.5 679V770M741.5 679V770M779.5 679V770M817.5 679V770M855.5 679V770" stroke="#7a7a7a" stroke-width="1" stroke-dasharray="3 3" fill="none"/>
<text class="ttl" x="81" y="688" textLength="87">Full Estocastico</text>
<line x1="71" y1="713.5" x2="893" y2="713.5" stroke="#e00" stroke-width="1" stroke-dasharray="3 3"/>
<line x1="71" y1="732.5" x2="893" y2="732.5" stroke="#0a6a0a" stroke-width="1" stroke-dasharray="3 3"/>
<polyline points="70.5,697 77.5,692 85,688 95,685 110,683.75 122.5,683 135,683.75 147.5,685 160,685.75 172.5,687 185,688 197.5,687.5 210,687.5 222.5,688 235,688.75 250,687.5 275,685.75 300,684.25 323.75,681.75 337.5,682.5 350,684.25 362.5,686.25 375,690 386.5,693.75 400,698.75 412.5,705 425,712.5 437.5,718 450,722.5 462.5,726.25 475,728.75 487.5,730.75 500,732.5 515,732 527.5,733 539.5,735 552.5,738.75 565.5,743.75 577.5,748.75 590.5,753 603.5,756.25 615.5,758 628.5,758 641.5,756.25 653.5,753 665.5,748.75 678.5,745 691.5,742 703.5,740.5 716.5,740.75 729.5,742.5 741.5,743.75 754.5,742.5 767.5,740 779.5,735 792.5,728.75 805.5,723.75 817.5,721.75 830.5,723.25 844.5,728.75 856.5,736.25 869.5,742.5 882.5,746.75" fill="none" stroke="#c6c6c6" stroke-width="2" stroke-dasharray="5 2.5"/>
<polyline points="70.5,683.75 95,683.25 108,683 120,680.5 133,682.5 146,687.5 159,693 171,691.75 185,688.75 197.5,685 210,685.75 222.5,686.75 235,688.75 247.5,688 262.5,684.5 275,683 287.5,682.5 300,682 312.5,681.5 323.75,681.5 337.5,684.25 350,688.75 362.5,695 375,702.5 386.5,708.75" fill="none" stroke="#1f9806" stroke-width="2.2" stroke-linejoin="round" stroke-linecap="round"/>
<polyline points="386.5,708.75 400,715 412.5,721.25 425,728 437.5,731.75 450,730.75 462.5,730 475,730.75 487.5,733" fill="none" stroke="#3a1a8c" stroke-width="2.2" stroke-linejoin="round" stroke-linecap="round"/>
<polyline points="487.5,733 501.5,733.75 514.5,733 527.5,736.25 539.5,741.25 552.5,751.25 565.5,759.5 577.5,763 590.5,760.5 603.5,756.75 615.5,756.25 628.5,754.25 641.5,750.5 653.5,742.5 665.5,735 678.5,733.75 691.5,738.75 703.5,745.5 716.5,751.75 729.5,750 741.5,742.5" fill="none" stroke="#ee0a0a" stroke-width="2.2" stroke-linejoin="round" stroke-linecap="round"/>
<polyline points="741.5,742.5 754.5,730.5 767.5,723.75 779.5,716.75" fill="none" stroke="#3a1a8c" stroke-width="2.2" stroke-linejoin="round" stroke-linecap="round"/>
<polyline points="779.5,716.75 792.5,713" fill="none" stroke="#1f9806" stroke-width="2.2" stroke-linejoin="round" stroke-linecap="round"/>
<polyline points="792.5,713 805.5,715 817.5,730.5" fill="none" stroke="#3a1a8c" stroke-width="2.2" stroke-linejoin="round" stroke-linecap="round"/>
<polyline points="817.5,730.5 830.5,746.25 844.5,757 856.5,755 869.5,748.75 882.5,743" fill="none" stroke="#ee0a0a" stroke-width="2.2" stroke-linejoin="round" stroke-linecap="round"/>
<text class="ax" x="66.8" y="688" text-anchor="end">100</text><text class="ax" x="66.8" y="713" text-anchor="end">60</text><text class="ax" x="66.8" y="732" text-anchor="end">40</text><text class="ax" x="66.8" y="771" text-anchor="end">0</text>
<text x="897.5" y="683.8">EST. %</text><text x="897.5" y="695">FULL</text><text x="897.5" y="705.8">(28,3,6)</text>
<text class="blue" x="899.5" y="742" style="font-size:12.5px;letter-spacing:-.2px">29,61</text>
<text x="21" y="790" style="font-size:13px;fill:#222" textLength="172.6" lengthAdjust="spacingAndGlyphs">Assicurazioni Generali (G.MI)</text>
<text class="blue" x="306" y="790" style="font-size:13px" textLength="576" lengthAdjust="spacingAndGlyphs">/Users/mserra/Library/CloudStorage/Dropbox/WorkDB/DatosBolsa/Configs/Config.DEFAULT.xml</text>
<rect x="919" y="776.2" width="66.8" height="18.6" fill="#fff"/><rect x="920" y="777" width="64.2" height="15.9" fill="#ee0a08"/><path d="M919.5 794.6V776.7H985.6" fill="none" stroke="#7c7c7c" stroke-width="1"/><path d="M919.3 794.3H985.3V776.9" fill="none" stroke="#9c9c9c" stroke-width="1"/>
<text x="923.3" y="789.6" style="fill:#fff;font-size:11.4px" textLength="21.6" lengthAdjust="spacingAndGlyphs">OFF</text>
<rect x="953.7" y="36.3" width="31.8" height="21.2" fill="url(#gBtn)" stroke="#a4a4a4" stroke-width="1.2"/>
<rect x="961" y="38.8" width="16" height="15.8" fill="#f1f1f1"/><circle cx="966.6" cy="44.7" r="4.1" fill="#cfcfcf" stroke="#1c1c1c" stroke-width="1.2"/><circle cx="965.6" cy="43.6" r="1.8" fill="#fff" fill-opacity=".55"/><path d="M969.6 48.2L975.5 53.3" stroke="#1a1a1a" stroke-width="1.7" stroke-linecap="round"/>
<rect x="953.4" y="61.2" width="31.4" height="21.4" fill="#fdf5f5"/><path d="M955.0 61.2H953.4V82.6H955.0M983.1999999999999 61.2H984.8V82.6H983.1999999999999" fill="none" stroke="#a8a8a8" stroke-width="1"/>
<path d="M954.8 82.6V63.2L956 66L956.8 82.6ZM957 82.6V69L959 67L960.4 70L962 78.6H964.6L966 70L967.2 64.9L968.4 70L970 76L971.4 82.6ZM971.8 82.6V78H973V82.6ZM977.6 82.6L978.6 76L980.6 72L982.4 76L983.2 82.6Z" fill="#4a4aac"/>
<path d="M954.8 82.2H973M977.4 82.2H983.4" stroke="#4a4aac" stroke-width=".9"/>
<path d="M957.5 61.4V82.4M971.8 61.4V82.4" stroke="#c8c8d4" stroke-width="1.3"/>
<path d="M954.9 66.2L956.4 68.6L958 69.4L961 69L968 68.2L969.4 66.2L970.4 68.4L972 68.8L974 68.4L976.4 72.4L978.6 68.4L980.6 68.2L982.6 69.2" fill="none" stroke="#e41414" stroke-width="1.3" stroke-linejoin="round"/>
<rect x="953.7" y="85.5" width="31.8" height="21.2" fill="url(#gBtn)" stroke="#a4a4a4" stroke-width="1.2"/>
<path d="M957.4 95.3H980.8" stroke="#e62a2a" stroke-width="2"/>
<rect x="953.7" y="110.5" width="31.8" height="21.2" fill="url(#gBtn)" stroke="#a4a4a4" stroke-width="1.2"/>
<path d="M957.4 120.5H980.8" stroke="#2a2aff" stroke-width="2"/>
<rect x="953.7" y="135.6" width="31.8" height="21.2" fill="url(#gBtn)" stroke="#a4a4a4" stroke-width="1.2"/>
<g transform="translate(0 135.3)"><path d="M957.2 16.1L972.6 0.1M965.4 21.1L980.8 5.1" stroke="#1a1a2a" stroke-width="1.1"/><path d="M965.4 21.1L962.4 11.3L970.4 14.9L970.4 8.3L975.6 10.1L972.6 0.5L979.2 4.3" fill="none" stroke="#5040f0" stroke-width="1" stroke-linejoin="round"/></g>
<rect x="953.7" y="160.6" width="31.8" height="21.2" fill="url(#gBtn)" stroke="#a4a4a4" stroke-width="1.2"/>
<g transform="translate(0 160.3)"><path d="M958.6 21.6L980 -0.2" stroke="#1c2626" stroke-width="1.5"/><path d="M973.4 0.2L972.8 6.8L978.6 6.2" fill="none" stroke="#2a1ae0" stroke-width="1.4" stroke-linecap="round"/><path d="M961.2 13.2L966.6 13.2L966.2 18.6" fill="none" stroke="#2a1ae0" stroke-width="1.4" stroke-linecap="round"/></g>
<rect x="953.7" y="185.5" width="31.8" height="21.2" fill="url(#gBtn)" stroke="#a4a4a4" stroke-width="1.2"/>
<g transform="translate(0 185.2)"><path d="M958.6 21.6L980 -0.2" stroke="#1c2626" stroke-width="1.5"/><path d="M973.4 0.2L972.8 6.8L978.6 6.2" fill="none" stroke="#2a1ae0" stroke-width="1.4" stroke-linecap="round"/><path d="M961.2 13.2L966.6 13.2L966.2 18.6" fill="none" stroke="#2a1ae0" stroke-width="1.4" stroke-linecap="round"/></g>
<text x="958.6" y="197.2" style="font-size:11.5px;font-weight:bold;fill:#ee1414">Σ</text>
<rect x="953.7" y="210.5" width="31.8" height="21.2" fill="url(#gBtn)" stroke="#a4a4a4" stroke-width="1.2"/>
<path transform="translate(969.4 220.6) scale(1)" d="M-2.1 -5.5H2.1V-1H4.9L0 5.5L-4.9 -1H-2.1Z" fill="#f01010"/>
<rect x="953.7" y="235.5" width="31.8" height="21.2" fill="url(#gBtn)" stroke="#a4a4a4" stroke-width="1.2"/>
<path transform="translate(969.4 245.8) scale(1)" d="M-2.1 5.5H2.1V1H4.9L0 -5.5L-4.9 1H-2.1Z" fill="#1414ff"/>
<rect x="953.7" y="260.6" width="31.8" height="21.2" fill="url(#gBtn)" stroke="#a4a4a4" stroke-width="1.2"/>
<path d="M961.2 265.5V275.3M957 270.4H965.6" stroke="#5aa62a" stroke-width="2.4"/><path d="M961.2 266.3V274.5M957.8 270.4H964.8" stroke="#9ad46a" stroke-width=".8"/>
<path transform="translate(973 270.9) scale(1.05)" d="M-2.1 -5.5H2.1V-1H4.9L0 5.5L-4.9 -1H-2.1Z" fill="#e01818"/>
<path d="M981.4 271.7L983.8 274.5L981.4 277.3L979 274.5Z" fill="#fff" stroke="#e01818" stroke-width=".9"/>
<rect x="953.4" y="285.2" width="32.4" height="21.6" fill="#f1f1f1"/><path d="M955.0 285.2H953.4V306.8H955.0M984.1999999999999 285.2H985.8V306.8H984.1999999999999" fill="none" stroke="#a8a8a8" stroke-width="1"/>
<path d="M957.2 291.2H963.6M966 291.2H972.4M974.8 291.2H981" stroke="#2a2a2a" stroke-width="1.7"/>
<path d="M957.2 296.4H963.6M966 296.4H972.4M974.8 296.4H981" stroke="#2a2a2a" stroke-width="1.7"/>
<path d="M957.2 301.6H963.6M966 301.6H972.4M974.8 301.6H981" stroke="#2a2a2a" stroke-width="1.7"/>
<rect x="953.4" y="311.2" width="32.4" height="21.4" fill="#f3f3f3"/><path d="M955.0 311.2H953.4V332.59999999999997H955.0M984.1999999999999 311.2H985.8V332.59999999999997H984.1999999999999" fill="none" stroke="#a8a8a8" stroke-width="1"/>
<path d="M956.4 313.2H972M956.4 330.6H972M964.2 315.2V328.6" stroke="#1414ff" stroke-width="1.3"/><path d="M964.2 313.8L961.6 318.2H966.8ZM964.2 330L961.6 325.6H966.8Z" fill="#1414ff"/>
<text transform="translate(973.4 328.2) scale(.58 1)" x="0" y="0" style="font-size:17.5px;fill:#000">%</text>
<rect x="953.7" y="335.7" width="31.8" height="20.4" fill="url(#gBtn)" stroke="#a4a4a4" stroke-width="1.2"/>
<path d="M958.6 340.8H970.8" stroke="#2a4aff" stroke-width="1.1"/><path d="M958.6 346.4H970.8" stroke="#111" stroke-width="1.3"/><path d="M958.6 352.2H970.8" stroke="#ee4030" stroke-width="1.5"/><text transform="translate(972.4 353) scale(.58 1)" x="0" y="0" style="font-size:18px;fill:#000">%</text>
<rect x="953.7" y="361.3" width="31.8" height="20.4" fill="url(#gBtn)" stroke="#a4a4a4" stroke-width="1.2"/>
<rect x="960" y="362.4" width="19" height="19.2" fill="#dcdce6"/><circle cx="969.2" cy="371.9" r="7.3" fill="#eadfe0" stroke="url(#gStop)" stroke-width="2.5"/><path d="M964 366.8L974.4 377" stroke="#c02a2a" stroke-width="2.5"/><path d="M963 368.4A7.3 7.3 0 0 1 973 365.6" fill="none" stroke="#f0a0a0" stroke-width="1" stroke-opacity=".8"/>
<rect x="953.7" y="385.5" width="31.8" height="20.4" fill="url(#gBtn)" stroke="#a4a4a4" stroke-width="1.2"/>
<circle cx="969" cy="396" r="6" fill="url(#gRec)"/>
<rect x="953.7" y="408.7" width="31.8" height="20.4" fill="url(#gBtn)" stroke="#a4a4a4" stroke-width="1.2"/>
<g transform="translate(0 408.4)" fill="#1c54d8"><path id="brf" d="M963.4 9.4C964.6 5.4 968.8 3.6 971.4 4.8L972.2 2.8L975 7.4L969.4 9.2L970.2 7.2C968.2 6.6 965.8 7.6 964.8 9.8Z"/><path d="M963.4 9.4C964.6 5.4 968.8 3.6 971.4 4.8L972.2 2.8L975 7.4L969.4 9.2L970.2 7.2C968.2 6.6 965.8 7.6 964.8 9.8Z" transform="rotate(180 969.1 10.7)"/></g>
<circle cx="969" cy="472.75" r="6.8" fill="#fff" stroke="#c6c6c6" stroke-width="1"/><rect x="953.7" y="487.3" width="31.8" height="21" fill="#fff" stroke="#a4a4a4" stroke-width="1.2"/><path transform="translate(963.4 497.8)" d="M-2.1 -5H2.1V-1.2H5.5L0 5L-5.5 -1.2H-2.1Z" fill="#e2231a"/><path transform="translate(976.5 497.8)" d="M-2.1 5H2.1V1.2H5.5L0 -5L-5.5 1.2H-2.1Z" fill="#5aa62a"/><rect x="953.7" y="513.5" width="31.8" height="20.6" fill="url(#gBtn)" stroke="#a4a4a4" stroke-width="1.2"/><path d="M958.6 518.6H970.8" stroke="#2a4aff" stroke-width="1.1"/><path d="M958.6 524.2H970.8" stroke="#111" stroke-width="1.3"/><path d="M958.6 530H970.8" stroke="#ee4030" stroke-width="1.5"/><text transform="translate(972.4 530.8) scale(.58 1)" x="0" y="0" style="font-size:18px;fill:#000">%</text><rect x="953.7" y="541.3" width="31.8" height="21" fill="url(#gBtn)" stroke="#a4a4a4" stroke-width="1.2"/><g transform="translate(0 541)"><path d="M957 14.6H961M963.6 14.6H965M967.6 14.6H971.6M974 14.6H978M980.6 14.6H982" stroke="#2a9a2a" stroke-width="1"/><path d="M977.4 12.4V14M977.4 16.8V19.6" stroke="#4a4ab0" stroke-width=".8"/><path d="M955.3 3.9C958 5 959.6 7 961 9.6L967.3 18.9C971 15 974 9 976.8 0.4" fill="none" stroke="#1616ff" stroke-width="2.2" stroke-linejoin="round"/><path d="M955.3 3.9C958.6 4.4 961 6 963 8.4L970 16.5C972.6 15.8 974 15 975.2 13.2C977.6 9.4 979.4 5 981 0.4" fill="none" stroke="#e21616" stroke-width="2.2" stroke-linejoin="round"/></g>
<circle cx="968.2" cy="580" r="7.1" fill="#2f7bff"/><circle cx="968.2" cy="580" r="3.2" fill="#fff"/><rect x="953.7" y="595.3" width="31.8" height="21" fill="#fff" stroke="#a4a4a4" stroke-width="1.2"/><path transform="translate(963.4 605.8)" d="M-2.1 -5H2.1V-1.2H5.5L0 5L-5.5 -1.2H-2.1Z" fill="#e2231a"/><path transform="translate(976.5 605.8)" d="M-2.1 5H2.1V1.2H5.5L0 -5L-5.5 1.2H-2.1Z" fill="#5aa62a"/><rect x="953.7" y="619.6" width="31.8" height="20.6" fill="url(#gBtn)" stroke="#a4a4a4" stroke-width="1.2"/><path d="M958.6 624.7H970.8" stroke="#2a4aff" stroke-width="1.1"/><path d="M958.6 630.3H970.8" stroke="#111" stroke-width="1.3"/><path d="M958.6 636.1H970.8" stroke="#ee4030" stroke-width="1.5"/><text transform="translate(972.4 636.9) scale(.58 1)" x="0" y="0" style="font-size:18px;fill:#000">%</text><rect x="953.7" y="643.3" width="31.8" height="21" fill="url(#gBtn)" stroke="#a4a4a4" stroke-width="1.2"/><g transform="translate(0 643)"><path d="M957 14.6H961M963.6 14.6H965M967.6 14.6H971.6M974 14.6H978M980.6 14.6H982" stroke="#2a9a2a" stroke-width="1"/><path d="M977.4 12.4V14M977.4 16.8V19.6" stroke="#4a4ab0" stroke-width=".8"/><path d="M955.3 3.9C958 5 959.6 7 961 9.6L967.3 18.9C971 15 974 9 976.8 0.4" fill="none" stroke="#1616ff" stroke-width="2.2" stroke-linejoin="round"/><path d="M955.3 3.9C958.6 4.4 961 6 963 8.4L970 16.5C972.6 15.8 974 15 975.2 13.2C977.6 9.4 979.4 5 981 0.4" fill="none" stroke="#e21616" stroke-width="2.2" stroke-linejoin="round"/></g>
<circle cx="969" cy="682.7" r="6.8" fill="#fff" stroke="#c6c6c6" stroke-width="1"/><rect x="953.7" y="697.3" width="31.8" height="21" fill="#fff" stroke="#a4a4a4" stroke-width="1.2"/><path transform="translate(963.4 707.8)" d="M-2.1 -5H2.1V-1.2H5.5L0 5L-5.5 -1.2H-2.1Z" fill="#e2231a"/><path transform="translate(976.5 707.8)" d="M-2.1 5H2.1V1.2H5.5L0 -5L-5.5 1.2H-2.1Z" fill="#5aa62a"/><rect x="953.7" y="722.3" width="31.8" height="20.6" fill="url(#gBtn)" stroke="#a4a4a4" stroke-width="1.2"/><path d="M958.6 727.4H970.8" stroke="#2a4aff" stroke-width="1.1"/><path d="M958.6 733H970.8" stroke="#111" stroke-width="1.3"/><path d="M958.6 738.8H970.8" stroke="#ee4030" stroke-width="1.5"/><text transform="translate(972.4 739.6) scale(.58 1)" x="0" y="0" style="font-size:18px;fill:#000">%</text><rect x="953.7" y="747.3" width="31.8" height="21" fill="url(#gBtn)" stroke="#a4a4a4" stroke-width="1.2"/><g transform="translate(0 747)"><path d="M957 14.6H961M963.6 14.6H965M967.6 14.6H971.6M974 14.6H978M980.6 14.6H982" stroke="#2a9a2a" stroke-width="1"/><path d="M977.4 12.4V14M977.4 16.8V19.6" stroke="#4a4ab0" stroke-width=".8"/><path d="M955.3 3.9C958 5 959.6 7 961 9.6L967.3 18.9C971 15 974 9 976.8 0.4" fill="none" stroke="#1616ff" stroke-width="2.2" stroke-linejoin="round"/><path d="M955.3 3.9C958.6 4.4 961 6 963 8.4L970 16.5C972.6 15.8 974 15 975.2 13.2C977.6 9.4 979.4 5 981 0.4" fill="none" stroke="#e21616" stroke-width="2.2" stroke-linejoin="round"/></g>
</svg></body></html>
